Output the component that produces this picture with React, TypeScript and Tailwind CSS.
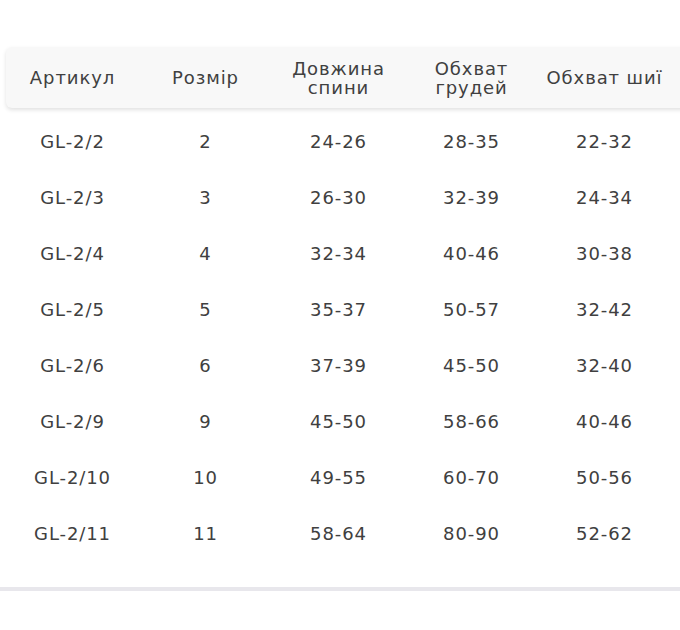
import { FC } from "react";

const headers = ["Артикул", "Розмір", "Довжина спини", "Обхват грудей", "Обхват шиї"];

const rows = [
  ["GL-2/2", "2", "24-26", "28-35", "22-32"],
  ["GL-2/3", "3", "26-30", "32-39", "24-34"],
  ["GL-2/4", "4", "32-34", "40-46", "30-38"],
  ["GL-2/5", "5", "35-37", "50-57", "32-42"],
  ["GL-2/6", "6", "37-39", "45-50", "32-40"],
  ["GL-2/9", "9", "45-50", "58-66", "40-46"],
  ["GL-2/10", "10", "49-55", "60-70", "50-56"],
  ["GL-2/11", "11", "58-64", "80-90", "52-62"],
];

const App: FC = () => {
  return (
    <div
      className="h-[630px] w-[680px] overflow-hidden bg-white text-[#404040]"
      style={{ fontFamily: "'DejaVu Sans', 'Liberation Sans', sans-serif" }}
    >
      <div className="pt-[47px] pl-[6px]">
        {/* header */}
        <div className="flex h-[61px] w-[700px] items-center rounded-[6px] bg-[#f8f8f8] shadow-[0_2px_4px_rgba(0,0,0,0.12)]">
          {headers.map((h, i) => (
            <div
              key={i}
              className={
                "w-[133px] shrink-0 text-center text-[18px] leading-[19px] tracking-[0.9px] " +
                (i === 2 || i === 3 ? "px-4" : "")
              }
            >
              {h}
            </div>
          ))}
        </div>

        {/* body */}
        <div className="mt-[5px]">
          {rows.map((r, i) => (
            <div key={i} className="flex h-[56px] items-center">
              {r.map((c, j) => (
                <div
                  key={j}
                  className="w-[133px] shrink-0 text-center text-[18px] tracking-[0.9px]"
                >
                  {c}
                </div>
              ))}
            </div>
          ))}
        </div>
      </div>
      <div className="mt-[26px] h-[4px] w-full bg-[#e8e7ec]"></div>
    </div>
  );
};

export default App;
